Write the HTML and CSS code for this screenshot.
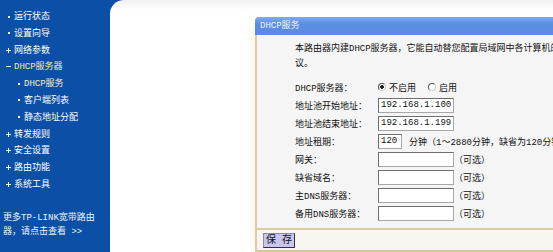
FILE: index.html
```html
<!DOCTYPE html>
<html lang="zh-CN">
<head>
<meta charset="utf-8">
<title>DHCP服务</title>
<link rel="stylesheet" href="styles.css">
</head>
<body>
<div class="page">
  <nav class="side">
    <ul class="menu">
      <li class="item dot">运行状态</li>
      <li class="item dot">设置向导</li>
      <li class="item plus">网络参数</li>
      <li class="item minus open">DHCP服务器</li>
      <li class="item sub dot current">DHCP服务</li>
      <li class="item sub dot">客户端列表</li>
      <li class="item sub dot">静态地址分配</li>
      <li class="item plus">转发规则</li>
      <li class="item plus">安全设置</li>
      <li class="item plus">路由功能</li>
      <li class="item plus">系统工具</li>
    </ul>
    <p class="more">更多TP-LINK宽带路由器，请点击查看 &gt;&gt;</p>
  </nav>
  <main class="main">
    <section class="panel">
      <div class="panel-head">DHCP服务</div>
      <div class="panel-body">
        <p class="intro"><span class="line">本路由器内建DHCP服务器，它能自动替您配置局域网中各计算机的TCP/IP协</span><br>议。</p>
        <div class="form">
          <div class="label">DHCP服务器：</div>
          <div class="field">
            <label class="opt"><input type="radio" name="dhcp" checked>不启用</label>
            <label class="opt"><input type="radio" name="dhcp">启用</label>
          </div>
          <div class="label">地址池开始地址：</div>
          <div class="field"><input class="text" type="text" value="192.168.1.100"></div>
          <div class="label">地址池结束地址：</div>
          <div class="field"><input class="text" type="text" value="192.168.1.199"></div>
          <div class="label">地址租期：</div>
          <div class="field"><input class="text short" type="text" value="120"><span class="hint">分钟（1～2880分钟，缺省为120分钟）</span></div>
          <div class="label">网关：</div>
          <div class="field"><input class="text" type="text"><span class="note">（可选）</span></div>
          <div class="label">缺省域名：</div>
          <div class="field"><input class="text" type="text"><span class="note">（可选）</span></div>
          <div class="label">主DNS服务器：</div>
          <div class="field"><input class="text" type="text"><span class="note">（可选）</span></div>
          <div class="label">备用DNS服务器：</div>
          <div class="field"><input class="text" type="text"><span class="note">（可选）</span></div>
        </div>
      </div>
      <div class="panel-foot">
        <button class="btn" type="button">保 存</button>
      </div>
    </section>
  </main>
</div>
</body>
</html>
```

FILE: styles.css
```css
* { box-sizing: border-box; }

html, body {
  margin: 0;
  padding: 0;
  width: 553px;
  height: 252px;
  overflow: hidden;
}

body {
  background: #0c4fa7;
  font-family: "Liberation Mono", "Noto Sans CJK SC", monospace;
  font-size: 9px;
  color: #111;
}

.page {
  display: flex;
  height: 252px;
}

/* ---------- sidebar ---------- */
.side {
  width: 110px;
  flex: none;
  padding-top: 9px;
  color: #fff;
}

.menu {
  list-style: none;
  margin: 0;
  padding: 0;
}

.item {
  line-height: 16.8px;
  height: 16.8px;
  white-space: nowrap;
}

.item::before {
  content: "";
  display: inline-block;
  width: 5px;
  height: 5px;
  margin: 0 3px 0 6px;
  vertical-align: 0;
}

.item.sub::before { margin-left: 16px; }

.dot::before {
  background: linear-gradient(#fff, #fff) center / 2px 2px no-repeat;
}

.plus::before {
  background:
    linear-gradient(#fff, #fff) center / 5px 1px no-repeat,
    linear-gradient(#fff, #fff) center / 1px 5px no-repeat;
}

.minus::before {
  background: linear-gradient(#fff, #fff) center / 5px 1px no-repeat;
}

.open { color: #f4ea9e; }
.current { color: #f7efc4; }

.more {
  margin: 17px 0 0 3px;
  width: 97px;
  line-height: 14px;
  color: #f2f2f2;
}

/* ---------- main ---------- */
.main {
  flex: 1;
  min-width: 0;
  overflow: hidden;
  background: linear-gradient(#f1f1f1, #fff 10px);
  border-top-left-radius: 14px;
  padding: 17px 0 0 145px;
}

.panel {
  width: 430px;
  box-shadow: -8px 0 10px -6px rgba(230, 220, 170, 0.35);
}

.panel-head {
  height: 18px;
  line-height: 18px;
  padding-left: 5px;
  border-top-left-radius: 4px;
  background: linear-gradient(#7ea9ef, #5a8de2 40%, #5a8de2);
  color: #eef3ff;
}

.panel-body {
  border-left: 2px solid #dacd9f;
  background: #f5f5f5;
  padding: 7px 0 6px 38px;
}

.intro {
  margin: 0;
  line-height: 15px;
}

.intro .line { white-space: nowrap; }

.form {
  margin-top: 6px;
  display: grid;
  grid-template-columns: 83px auto;
  grid-auto-rows: 18px;
  align-items: center;
}

.field {
  display: flex;
  align-items: center;
  white-space: nowrap;
}

.opt {
  display: inline-flex;
  align-items: center;
  margin-right: 12px;
}

.opt input {
  appearance: none;
  -webkit-appearance: none;
  width: 8px;
  height: 8px;
  margin: 0 3px 0 0;
  border-radius: 50%;
  border: 1px solid;
  border-color: #555 #cfcfcf #cfcfcf #555;
  background: #fff;
}

.opt input:checked {
  background: radial-gradient(circle, #222 0 1.6px, #fff 2px);
}

.text {
  width: 76px;
  height: 15px;
  margin: 0;
  padding: 0 2px;
  border: 1px solid;
  border-color: #6e6e6e #a8a8a8 #a8a8a8 #6e6e6e;
  background: #fff;
  font: inherit;
  color: #111;
  outline: none;
}

.text.short { width: 24px; }

.hint { margin-left: 7px; }
.note { margin-left: 0; }

.panel-foot {
  border-left: 2px solid #dacd9f;
  border-top: 2px solid #dacd9f;
  border-bottom: 2px solid #d4c59a;
  background: #f8f5f1;
  padding: 3px 0 2px 6px;
}

.btn {
  display: block;
  width: 32px;
  height: 15px;
  margin: 0;
  padding: 0;
  border: 1px solid;
  border-color: #8a8aa8 #333 #333 #8a8aa8;
  background: #c6c6ee;
  font: inherit;
  font-size: 10px;
  line-height: 13px;
  color: #111;
}
```
